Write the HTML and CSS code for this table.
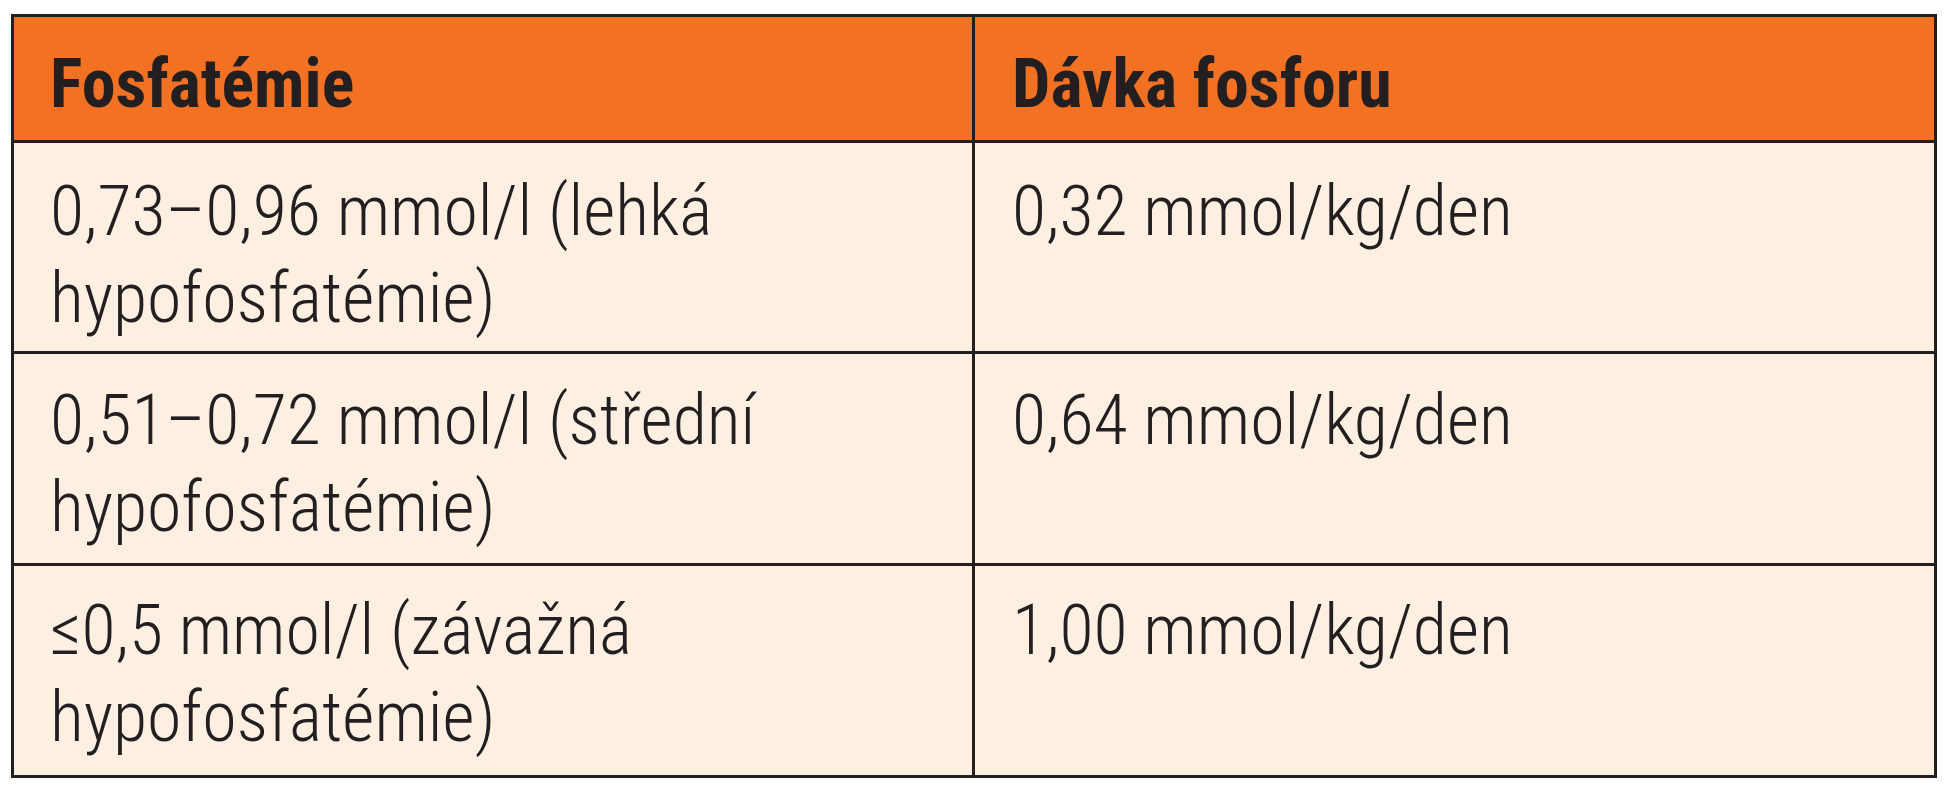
FILE: index.html
```html
<!DOCTYPE html>
<html lang="cs">
<head>
<meta charset="utf-8">
<title>Fosfatémie</title>
<link rel="stylesheet" href="styles.css">
</head>
<body>
<div class="table">
  <div class="row head">
    <div class="cell">Fosfatémie</div>
    <div class="cell">Dávka fosforu</div>
  </div>
  <div class="row r1">
    <div class="cell">0,73–0,96 mmol/l (lehká hypofosfatémie)</div>
    <div class="cell">0,32 mmol/kg/den</div>
  </div>
  <div class="row r2">
    <div class="cell">0,51–0,72 mmol/l (střední hypofosfatémie)</div>
    <div class="cell">0,64 mmol/kg/den</div>
  </div>
  <div class="row r3">
    <div class="cell">≤0,5 mmol/l (závažná hypofosfatémie)</div>
    <div class="cell">1,00 mmol/kg/den</div>
  </div>
</div>
</body>
</html>
```
FILE: styles.css
```css
html, body {
  margin: 0;
  background: #ffffff;
}
body {
  padding: 14px 0 0 11px;
  font-family: "Roboto Condensed", "Liberation Sans", sans-serif;
  color: #231f20;
}
.table {
  width: 1926px;
  box-sizing: border-box;
  border: 3px solid #231f20;
  background: #fdf0e2;
}
.row {
  display: grid;
  grid-template-columns: 958px 1fr;
  border-bottom: 3px solid #231f20;
}
.row:last-child {
  border-bottom: none;
}
.cell {
  padding: 23px 40px 0 36px;
  font-size: 70px;
  line-height: 87px;
  font-weight: 300;
}
.cell + .cell {
  border-left: 3px solid #231f20;
  padding-left: 37px;
}
.head {
  background: #f27122;
  height: 123px;
}
.head .cell {
  padding-top: 27px;
  font-size: 68px;
  line-height: 80px;
  font-weight: 700;
}
.r1 { height: 208px; }
.r1 .cell { padding-top: 25px; }
.r2 { height: 209px; }
.r3 { height: 209px; }
.r3 .cell { padding-top: 21px; }
```
